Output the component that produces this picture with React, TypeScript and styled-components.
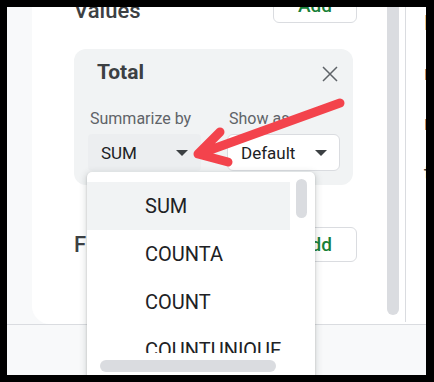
import React from 'react';
import styled, { createGlobalStyle } from 'styled-components';

const GlobalStyle = createGlobalStyle`
  html, body {
    margin: 0;
    padding: 0;
    background: #000;
  }
  * {
    box-sizing: border-box;
  }
`;

const menuItems = ['SUM', 'COUNTA', 'COUNT', 'COUNTUNIQUE'];
const sheetCells = ['Data', 'number', 'number', 'total'];

const App = () => {
  return (
    <>
      <GlobalStyle />
      <Frame>
        <TopArea>
          <LeftStrip />
          <Panel>
            <Content>
              <SectionRow>
                <SectionLabel $shift={10}>Values</SectionLabel>
                <AddButton>Add</AddButton>
              </SectionRow>

              <Card>
                <CardHeader>
                  <CardTitle>Total</CardTitle>
                  <CloseIcon viewBox="0 0 16 16">
                    <path d="M1 1 L15 15 M15 1 L1 15" />
                  </CloseIcon>
                </CardHeader>
                <Fields>
                  <Field>
                    <FieldLabel>Summarize by</FieldLabel>
                    <Select $focused>
                      <span>SUM</span>
                      <Caret />
                    </Select>
                  </Field>
                  <Field>
                    <FieldLabel>Show as</FieldLabel>
                    <Select>
                      <span>Default</span>
                      <Caret />
                    </Select>
                  </Field>
                </Fields>
              </Card>

              <SectionRow $gap={42} $height={35}>
                <SectionLabel>Filters</SectionLabel>
                <AddButton>Add</AddButton>
              </SectionRow>
            </Content>
            <ScrollTrack>
              <ScrollThumb />
            </ScrollTrack>
            <Divider />
            <SheetColumn>
              {sheetCells.map((cell, i) => (
                <SheetCell key={i}>{cell}</SheetCell>
              ))}
            </SheetColumn>
          </Panel>
        </TopArea>
        <BottomArea />

        <Menu>
          <MenuBody>
            <MenuList>
              {menuItems.map((item, i) => (
                <MenuItem key={item} $active={i === 0}>{item}</MenuItem>
              ))}
            </MenuList>
            <MenuGutter>
              <VThumb />
            </MenuGutter>
          </MenuBody>
          <HThumb />
        </Menu>

        <Arrow viewBox="0 0 419 368">
          <path d="M333 96 L192 147 M213 125 L191 147 L221 155" />
        </Arrow>
      </Frame>
    </>
  );
};

export default App;

const Frame = styled.div`
  position: relative;
  width: 434px;
  height: 382px;
  border-style: solid;
  border-color: #000;
  border-width: 7px 8px 7px 7px;
  overflow: hidden;
  background: #f8f9fa;
  font-family: Roboto, "Noto Sans", Arial, sans-serif;
`;

const TopArea = styled.div`
  display: flex;
  height: 317px;
  background: #f8f9fa;
`;

const LeftStrip = styled.div`
  width: 25px;
  flex-shrink: 0;
`;

const Panel = styled.div`
  flex: 1;
  display: flex;
  background: #fff;
  border-bottom-left-radius: 18px;
  overflow: hidden;
`;

const Content = styled.div`
  width: 355px;
  flex-shrink: 0;
  padding-left: 42px;
  margin-top: -20px;
  display: flex;
  flex-direction: column;
`;

const SectionRow = styled.div<{ $gap?: number; $height?: number }>`
  width: 283px;
  height: ${p => p.$height ?? 36}px;
  margin-top: ${p => p.$gap ?? 0}px;
  display: flex;
  align-items: center;
  justify-content: space-between;
`;

const SectionLabel = styled.div<{ $shift?: number }>`
  margin-top: ${p => p.$shift ?? 0}px;
  font-size: 22px;
  font-weight: 500;
  color: #3c4043;
`;

const AddButton = styled.button`
  width: 84px;
  height: 100%;
  border: 1px solid #dadce0;
  border-radius: 6px;
  background: #fff;
  font-family: inherit;
  font-size: 19px;
  font-weight: 500;
  color: #188038;
  padding: 0;
`;

const Card = styled.div`
  width: 279px;
  margin-top: 26px;
  padding: 11px 13px 14px 14px;
  background: #f1f3f4;
  border-radius: 12px;
`;

const CardHeader = styled.div`
  height: 24px;
  display: flex;
  align-items: center;
  justify-content: space-between;
  padding: 0 2px 0 9px;
`;

const CardTitle = styled.div`
  font-size: 21px;
  line-height: 24px;
  font-weight: 700;
  color: #3c4043;
`;

const CloseIcon = styled.svg`
  width: 16px;
  height: 16px;
  margin-top: 4px;
  fill: none;
  stroke: #5f6368;
  stroke-width: 1.5;
`;

const Fields = styled.div`
  margin-top: 25px;
  display: grid;
  grid-template-columns: 113px 113px;
  column-gap: 26px;
`;

const Field = styled.div`
  display: flex;
  flex-direction: column;
`;

const FieldLabel = styled.div`
  padding-left: 2px;
  font-size: 16px;
  line-height: 20px;
  color: #5f6368;
  white-space: nowrap;
  margin-bottom: 5px;
`;

const Select = styled.div<{ $focused?: boolean }>`
  height: 37px;
  display: flex;
  align-items: center;
  justify-content: space-between;
  padding: 0 12px 0 ${p => (p.$focused ? 12 : 13)}px;
  border-radius: ${p => (p.$focused ? 4 : 6)}px;
  background: ${p => (p.$focused ? '#eceef0' : '#fff')};
  border: 1px solid ${p => (p.$focused ? 'transparent' : '#dadce0')};
  font-size: 17px;
  color: #202124;
`;

const Caret = styled.span`
  width: 0;
  height: 0;
  border-left: 6px solid transparent;
  border-right: 6px solid transparent;
  border-top: 6px solid #3c4043;
  margin-top: 1px;
`;

const ScrollTrack = styled.div`
  width: 12px;
  flex-shrink: 0;
  margin-right: 6px;
`;

const ScrollThumb = styled.div`
  height: 308px;
  background: #dadce0;
  border-radius: 0 0 6px 6px;
`;

const Divider = styled.div`
  width: 1px;
  height: 315px;
  background: #dadce0;
  flex-shrink: 0;
`;

const SheetColumn = styled.div`
  width: 20px;
  flex-shrink: 0;
  display: flex;
  flex-direction: column;
`;

const SheetCell = styled.div`
  height: 50px;
  padding: 2px 0 0 18px;
  font-size: 21px;
  line-height: 28px;
  color: #3c4043;
  white-space: nowrap;
`;

const BottomArea = styled.div`
  height: 51px;
  border-top: 1px solid #dadce0;
  background: #f8f9fa;
`;

const Menu = styled.div`
  position: absolute;
  left: 80px;
  top: 165px;
  width: 228px;
  height: 230px;
  background: #fff;
  border-radius: 5px;
  box-shadow: 0 1px 2px rgba(60, 64, 67, 0.3), 0 2px 6px 2px rgba(60, 64, 67, 0.15);
  display: flex;
  flex-direction: column;
`;

const MenuBody = styled.div`
  height: 181px;
  display: flex;
`;

const MenuList = styled.div`
  width: 203px;
  padding-top: 10px;
  overflow: hidden;
`;

const MenuItem = styled.div<{ $active?: boolean }>`
  height: 48px;
  line-height: 48px;
  padding-left: 58px;
  font-size: 20px;
  color: #202124;
  white-space: nowrap;
  background: ${p => (p.$active ? '#f1f3f4' : 'transparent')};
`;

const MenuGutter = styled.div`
  flex: 1;
  padding: 7px 0 0 6px;
`;

const VThumb = styled.div`
  width: 11px;
  height: 39px;
  border-radius: 6px;
  background: #dadce0;
`;

const HThumb = styled.div`
  width: 176px;
  height: 12px;
  margin: 7px 0 0 13px;
  border-radius: 6px;
  background: #dadce0;
`;

const Arrow = styled.svg`
  position: absolute;
  left: 0;
  top: 0;
  width: 419px;
  height: 368px;
  pointer-events: none;
  fill: none;
  stroke: #f3434c;
  stroke-width: 9;
  stroke-linecap: round;
  stroke-linejoin: round;
`;
